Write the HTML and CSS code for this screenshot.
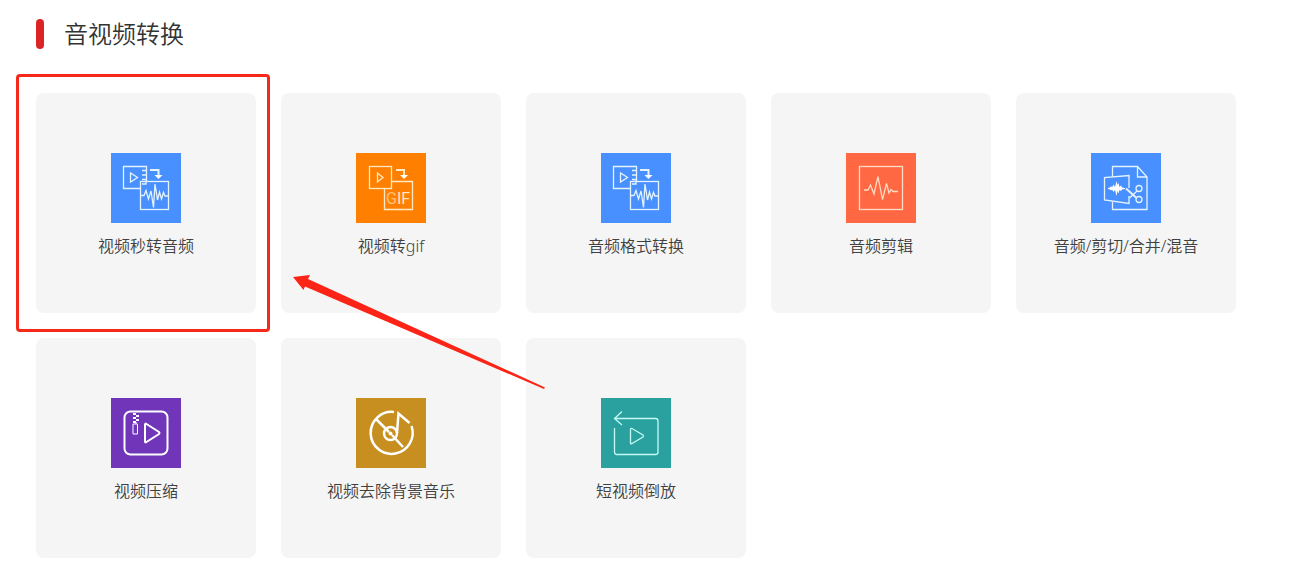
FILE: index.html
```html
<!DOCTYPE html>
<html lang="zh-CN">
  <head>
    <meta charset="UTF-8" />
    <title>音视频转换</title>
    <link rel="stylesheet" href="styles.css">
  </head>
  <body>
    <section class="tools">
      <h2 class="tools-title">音视频转换</h2>

      <div class="tools-list">
        <div class="tool-wrap">
          <a class="tool" href="#video-to-audio">
            <svg class="icon blue" viewBox="0 0 70 70" aria-hidden="true">
              <path d="M29.5 35.5H12.5V13.5H35.5V28.5M31 17.5H35M31 22H35M31 26.5H35M31 31H35V28" />
              <path d="M19.5 20V29L26.5 24.5Z" />
              <path class="bold" d="M39 17H47.5V22" />
              <path class="fill" d="M43.5 22H51.5L47.5 26Z" />
              <rect x="29.5" y="28.5" width="28" height="28" />
              <path d="M30 42.5H33L35 37.5L37.5 46L40 38L42.5 54.5L44 31L46.5 47L48.5 39L50.5 46L52.5 39.5L54 43H57" />
            </svg>
            <span class="name">视频秒转音频</span>
          </a>

          <!-- highlight frame and pointer -->
          <span class="frame"></span>
          <svg class="pointer" viewBox="0 0 256 116" aria-hidden="true">
            <path d="M1 3L18 1L16 5L253 113.5L252 115L13 12.5L11.5 16Z" />
          </svg>
        </div>

        <a class="tool" href="#video-to-gif">
          <svg class="icon orange" viewBox="0 0 70 70" aria-hidden="true">
            <rect x="13.5" y="13.5" width="22" height="22" />
            <path d="M21.5 20V29L27 24.5Z" />
            <path class="bold" d="M40 17H48V22" />
            <path class="fill" d="M44 22H52L48 26Z" />
            <path d="M36 28.5H56.5V56.5H28.5V36" />
            <text x="30" y="51"><tspan class="dim">G</tspan>IF</text>
          </svg>
          <span class="name">视频转gif</span>
        </a>

        <a class="tool" href="#audio-format">
          <svg class="icon blue" viewBox="0 0 70 70" aria-hidden="true">
            <path d="M29.5 35.5H12.5V13.5H35.5V28.5M31 17.5H35M31 22H35M31 26.5H35M31 31H35V28" />
            <path d="M19.5 20V29L26.5 24.5Z" />
            <path class="bold" d="M39 17H47.5V22" />
            <path class="fill" d="M43.5 22H51.5L47.5 26Z" />
            <rect x="29.5" y="28.5" width="28" height="28" />
            <path d="M30 42.5H33L35 37.5L37.5 46L40 38L42.5 54.5L44 31L46.5 47L48.5 39L50.5 46L52.5 39.5L54 43H57" />
          </svg>
          <span class="name">音频格式转换</span>
        </a>

        <a class="tool" href="#audio-edit">
          <svg class="icon coral" viewBox="0 0 70 70" aria-hidden="true">
            <rect x="13.5" y="13.5" width="43" height="43" />
            <path d="M18 37H22L24.5 32L28 41L32 23.5L36.5 46.5L40.5 30.5L43 40L45 36.5L47 38.5H52" />
          </svg>
          <span class="name">音频剪辑</span>
        </a>

        <a class="tool" href="#audio-mix">
          <svg class="icon blue" viewBox="0 0 70 70" aria-hidden="true">
            <path d="M21.5 23.5V13.5H46.5L56 24V56.5H21.5V49M46.5 13.5V24H56" />
            <path d="M38 35V22.5L13.5 24.5V47L38 50.5V43" />
            <path class="fill" d="M17 35L19 34.5L20 33L21 34.5L22.5 31.5L24 34L25.5 28L26.5 32L27.5 30L28.5 34L30 32.5L31 34.5L34 35V36L31 36.5L30 38L28.5 37L27.5 40.5L26.5 38L25.5 43L24 37L22.5 39L21 36.5L20 37.5L19 36.5L17 36Z" />
            <path class="bold" d="M35 35.5L45 44.5" />
            <path d="M38.5 45L46 38" />
            <circle cx="48" cy="35.5" r="3" />
            <circle cx="48" cy="46.5" r="3" />
          </svg>
          <span class="name">音频/剪切/合并/混音</span>
        </a>

        <a class="tool" href="#video-compress">
          <svg class="icon purple" viewBox="0 0 70 70" aria-hidden="true">
            <rect x="13.5" y="13.5" width="43" height="43" rx="6" />
            <path d="M34 26.5V43.5Q34 45 35.5 44L48 36Q49 35 48 34L35.5 26Q34 25 34 26.5Z" />
            <path class="thin" d="M22 26H26.5V36H22ZM25 24V26" />
            <path class="fill" d="M22 15H25V17H22ZM25 17H28V19H25ZM22 19H25V21H22ZM25 21H28V23H25ZM22 23H25V25H22Z" />
          </svg>
          <span class="name">视频压缩</span>
        </a>

        <a class="tool" href="#remove-music">
          <svg class="icon gold" viewBox="0 0 70 70" aria-hidden="true">
            <path d="M38 14A21 21 0 1 0 55.5 28" />
            <path d="M20 21L33 34M36 37L47 49" />
            <circle cx="34.5" cy="35.5" r="6.5" />
            <circle class="fill" cx="34.5" cy="35.5" r="2" />
            <path d="M41 35L42.5 15.5L53.5 25" />
          </svg>
          <span class="name">视频去除背景音乐</span>
        </a>

        <a class="tool" href="#video-reverse">
          <svg class="icon teal" viewBox="0 0 70 70" aria-hidden="true">
            <path d="M13.5 30V54Q13.5 56.5 16 56.5H54.5Q57 56.5 57 54V23Q57 20.5 54.5 20.5H14M21 13.5L13.5 20.5L21 27" />
            <path d="M29.5 31.5V45Q29.5 46.5 31 45.5L42 39Q43 38 42 37L31 30.5Q29.5 30 29.5 31.5Z" />
          </svg>
          <span class="name">短视频倒放</span>
        </a>
      </div>
    </section>
  </body>
</html>
```
FILE: styles.css
```css
* {
  box-sizing: border-box;
}
body {
  margin: 0;
  background: #fff;
  color: #404040;
  font-family: "Noto Sans", "Noto Sans CJK SC", sans-serif;
  font-weight: 350;
}
.tools {
  padding: 19px 36px 16px;
}
.tools-title {
  display: flex;
  gap: 20px;
  height: 30px;
  margin: 0 0 44px;
  color: #333;
  font-size: 24px;
  font-weight: 350;
  line-height: 30px;
}
.tools-title::before {
  content: "";
  width: 8px;
  height: 30px;
  border-radius: 4px;
  background: #dd2424;
}
.tools-list {
  display: flex;
  flex-wrap: wrap;
  gap: 25px;
}
.tool-wrap {
  position: relative;
}
.tool {
  display: flex;
  flex-direction: column;
  align-items: center;
  gap: 11px;
  width: 220px;
  height: 220px;
  padding-top: 60px;
  border-radius: 8px;
  background: #f5f5f5;
  color: inherit;
  text-decoration: none;
}
.name {
  font-size: 16px;
  line-height: 24px;
}

/* icons */
.icon {
  width: 70px;
  height: 70px;
  fill: none;
  stroke: #e4f4ff;
  stroke-width: 1.3;
}
.icon .fill {
  fill: #fff;
  stroke: none;
}
.icon .thin {
  stroke-width: 1;
}
.icon .bold {
  stroke-width: 2;
}
.icon text {
  fill: #ffe9c4;
  stroke: none;
  font-family: Roboto, sans-serif;
  font-size: 16px;
  font-weight: 400;
}
.icon .dim {
  fill: #ffc078;
}
.blue {
  background: #488fff;
}
.orange {
  background: #ff8000;
  stroke: #ffe9c4;
}
.coral {
  background: #ff6843;
  stroke: #ffdcc4;
}
.purple {
  background: #7035b9;
  stroke: #fff;
  stroke-width: 2;
}
.gold {
  background: #c68f20;
  stroke: #fff;
  stroke-width: 2.5;
}
.teal {
  background: #2aa09f;
  stroke: #c4fbf4;
}

/* overlay */
.frame {
  position: absolute;
  inset: -19px -14px -19px -20px;
  border: 3px solid #f62819;
  border-radius: 4px;
  pointer-events: none;
}
.pointer {
  position: absolute;
  top: 181px;
  left: 256px;
  z-index: 1;
  width: 256px;
  height: 116px;
  fill: #fb2416;
  pointer-events: none;
}
```
